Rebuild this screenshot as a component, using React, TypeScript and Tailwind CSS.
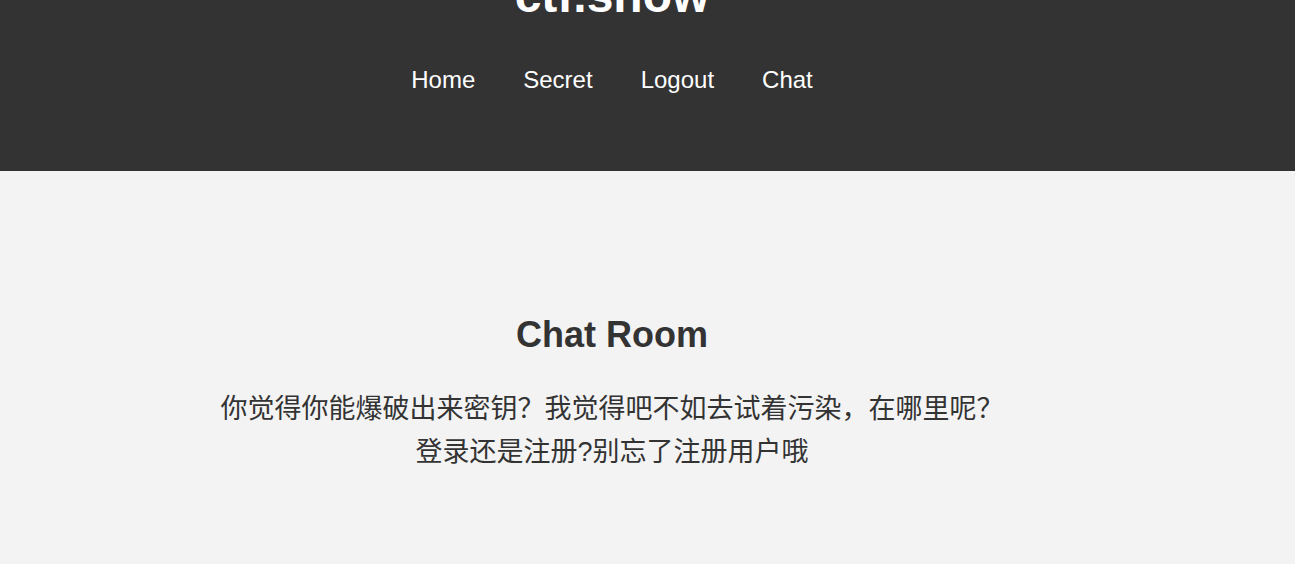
export default function App() {
  return (
    <div className="min-h-[564px] bg-[#f3f3f3] font-['Liberation_Sans','Noto_Sans_CJK_SC',sans-serif] text-[#333333]">
      {/* Header */}
      <header className="h-[171px] overflow-hidden bg-[#333333]">
        <div className="flex flex-col items-center pr-[71px]">
          <h1 className="mt-[-28px] text-[48px] font-bold leading-none text-white">ctf.show</h1>
          <nav className="mt-[48px] flex gap-[48px] text-[24px] leading-none text-white">
            <a href="#">Home</a>
            <a href="#">Secret</a>
            <a href="#">Logout</a>
            <a href="#">Chat</a>
          </nav>
        </div>
      </header>

      {/* Chat room */}
      <main className="flex flex-col items-center pr-[71px] pt-[146px]">
        <h2 className="text-[36px] font-bold leading-none">Chat Room</h2>
        <p className="mt-[35px] text-center text-[27px] leading-[43px]">
          你觉得你能爆破出来密钥？我觉得吧不如去试着污染，在哪里呢？
          <br />
          登录还是注册?别忘了注册用户哦
        </p>
      </main>
    </div>
  );
}
